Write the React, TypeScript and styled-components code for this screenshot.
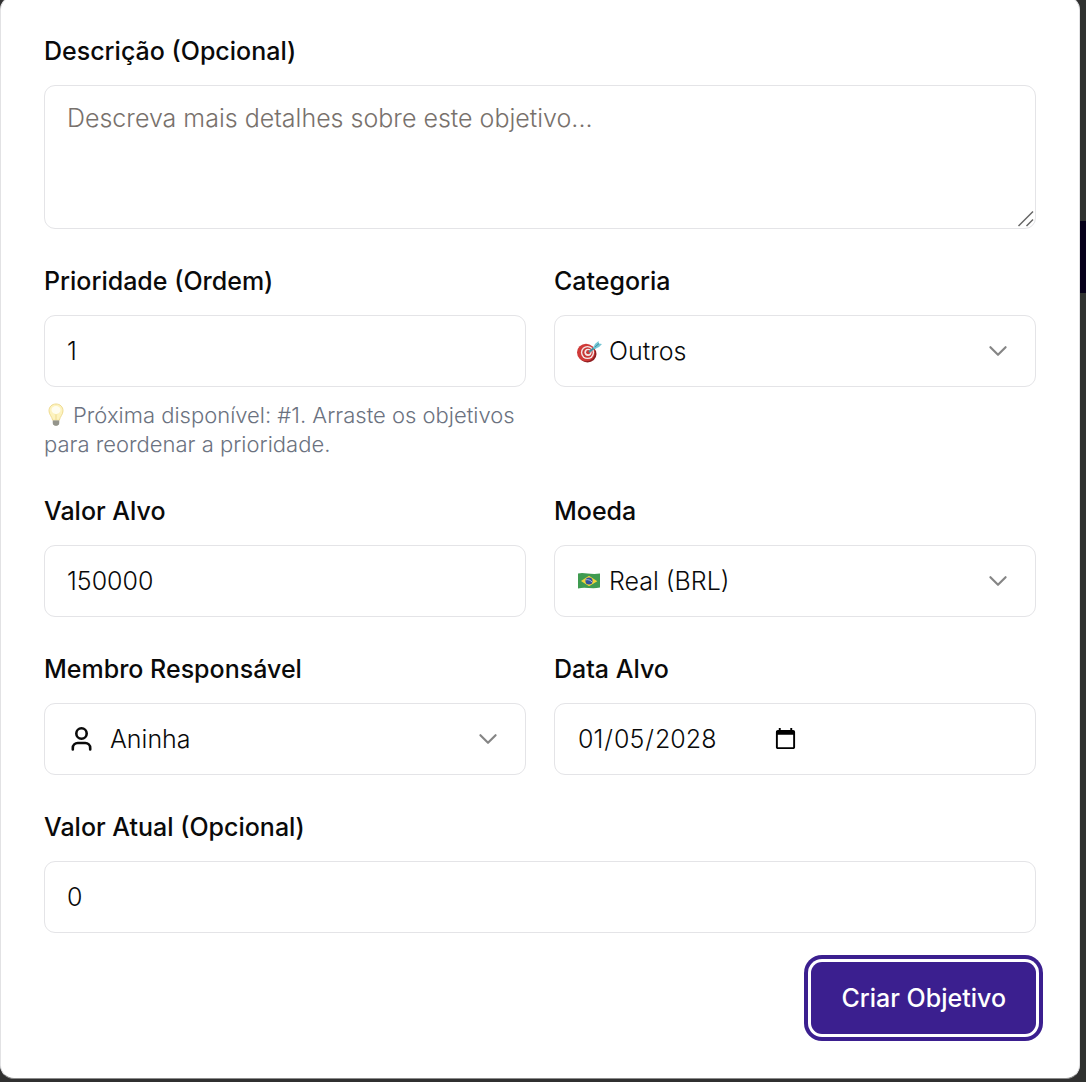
import React from "react";
import styled, { createGlobalStyle, css } from "styled-components";

const GlobalStyle = createGlobalStyle`
  *, *::before, *::after { box-sizing: border-box; }
  body {
    margin: 0;
    background: #303030;
    color: #0a0a0a;
    font-family: Inter, "Liberation Sans", sans-serif;
    font-size: 25px;
    font-weight: 300;
    overflow-x: hidden;
  }
`;

const Page = styled.div`
  display: grid;
  grid-template-columns: minmax(0, 1fr) 6px;
  min-height: 100vh;
  overflow: hidden;
`;

const Backdrop = styled.div`
  display: flex;
  flex-direction: column;
  padding-top: 221px;
  background: #303230;
`;

const BackdropStrip = styled.div`
  height: 72px;
  background: #06001a;
`;

const Dialog = styled.form`
  align-self: start;
  margin-top: -4px;
  padding: 36px 43px 44px;
  background: #ffffff;
  border: 1px solid #e2e2e4;
  border-bottom-color: #8c8c8c;
  border-radius: 14px;
`;

const Fields = styled.div`
  display: grid;
  grid-template-columns: repeat(2, minmax(0, 1fr));
  column-gap: 28px;
  row-gap: 34px;
`;

const Field = styled.div<{ $wide?: boolean }>`
  display: flex;
  flex-direction: column;
  grid-column: ${(p) => (p.$wide ? "1 / -1" : "auto")};
`;

const Label = styled.label`
  margin-bottom: 16px;
  font-weight: 500;
  line-height: 36px;
`;

const Hint = styled.p`
  margin: 14px 0 0;
  color: #6b7280;
  font-size: 22px;
  line-height: 29px;
`;

const controlStyle = css`
  width: 100%;
  height: 72px;
  margin: 0;
  padding: 0 22px;
  background: #ffffff;
  border: 1px solid #e4e4e7;
  border-radius: 11px;
  color: #0a0a0a;
  font: inherit;
  outline: none;
  appearance: none;
`;

const TextInput = styled.input`
  ${controlStyle}
`;

const DateInput = styled.input`
  ${controlStyle}

  &::-webkit-datetime-edit {
    flex: none;
  }
  &::-webkit-calendar-picker-indicator {
    width: 25px;
    height: 25px;
    margin-left: 10px;
    padding: 0;
  }
`;

const TextArea = styled.textarea`
  ${controlStyle}
  display: block;
  height: 144px;
  padding: 14px 22px;
  line-height: 36px;
  resize: vertical;

  &::placeholder {
    color: #78716c;
    opacity: 1;
  }
  &::-webkit-resizer {
    display: none;
  }
`;

const Overlay = styled.div`
  display: grid;
  align-items: center;

  > * {
    grid-area: 1 / 1;
  }
`;

const Select = styled.select<{ $indent: number }>`
  ${controlStyle}
  padding-left: ${(p) => p.$indent}px;
`;

const Lead = styled.span`
  display: flex;
  justify-self: start;
  margin-left: 22px;
  pointer-events: none;
`;

const Chevron = styled.svg`
  justify-self: end;
  margin-right: 25px;
  pointer-events: none;
`;

const Grip = styled.svg`
  align-self: end;
  justify-self: end;
  margin: 0 1px 1px 0;
  pointer-events: none;
`;

const Bulb = styled.svg`
  margin-right: 6px;
  vertical-align: -4px;
`;

const Actions = styled.div`
  display: flex;
  justify-content: flex-end;
  margin-top: 29px;
`;

const SubmitButton = styled.button`
  height: 72px;
  padding: 0 30px;
  background: #3b1f8f;
  border: 0;
  border-radius: 11px;
  box-shadow: 0 0 0 3px #ffffff, 0 0 0 7px #3b1f8f;
  color: #ffffff;
  font: inherit;
  font-weight: 500;
  cursor: pointer;
`;

const ChevronIcon = () => (
  <Chevron width="26" height="26" viewBox="0 0 24 24" fill="none" stroke="#858585" strokeWidth="2" strokeLinecap="round" strokeLinejoin="round" aria-hidden="true">
    <path d="m5 8.500 7 7 7-7" />
  </Chevron>
);

const TargetIcon = () => (
  <svg width="28" height="28" viewBox="0 0 28 28" aria-hidden="true">
    <ellipse cx="11.500" cy="17" rx="9" ry="8.500" fill="#8f1f22" />
    <ellipse cx="10" cy="15.500" rx="9" ry="8.800" fill="#d03a38" />
    <circle cx="11.500" cy="15.500" r="6.600" fill="#f3e9e8" />
    <circle cx="11.500" cy="15.500" r="5.200" fill="#c93735" />
    <circle cx="12" cy="15.300" r="3.600" fill="#f3e9e8" />
    <circle cx="12.200" cy="15.200" r="2.100" fill="#c93735" />
    <path d="M13 15 20 9.500" stroke="#3d8ea0" strokeWidth="2" />
    <path d="m17 11 2-4 3.600-3 .2 2.600L26 7l-3 3-4 2z" fill="#74c6d4" />
    <path d="m19 10 4-3.500" stroke="#3d8ea0" />
  </svg>
);

const BrazilIcon = () => (
  <svg width="28" height="28" viewBox="0 0 28 28" aria-hidden="true">
    <path d="M2 6.600c6-1.800 11 1.400 22 0v14c-9 1.700-15-1-22 1z" fill="#3f9b50" />
    <path d="m5 14 8-5.300 8.300 5.500-8.300 5z" fill="#f3d43b" />
    <circle cx="13" cy="14" r="3.600" fill="#31509d" />
    <path d="M9.800 12.800c2.500-.5 4.600.3 6.400 2.400" fill="none" stroke="#c8d6ea" strokeWidth=".8" />
  </svg>
);

const PersonIcon = () => (
  <svg width="30" height="30" viewBox="0 0 30 30" fill="none" stroke="#0a0a0a" strokeWidth="2.6" strokeLinecap="round" aria-hidden="true">
    <circle cx="15.500" cy="9.500" r="5.200" />
    <path d="M6.800 25.500v-1.500a5 5 0 0 1 5-5h7.400a5 5 0 0 1 5 5v1.500" />
  </svg>
);

const BulbIcon = () => (
  <Bulb width="23" height="24" viewBox="0 0 23 24" aria-hidden="true">
    <path d="M12 1C7.900 1 5 3.900 5 7.800c0 3.800 2.900 5.500 3.700 9.500h6.600c.8-4 3.700-5.700 3.700-9.500C19 3.900 16.100 1 12 1z" fill="#fdf3bf" stroke="#efdb91" />
    <path d="M10 9.500 11.500 12v5m2.500-7.500L12.500 12v5" fill="none" stroke="#f0dd95" strokeWidth=".6" />
    <ellipse cx="12" cy="7" rx="4.500" ry="4" fill="#fffdf0" />
    <path d="M8.800 17.200h6.400V21l-2 2h-2.400l-2-2z" fill="#a9a99f" />
    <path d="M8.800 19h6.400M9 21h6" stroke="#77776f" strokeWidth=".8" />
  </Bulb>
);

type SelectFieldProps = {
  id: string;
  label: string;
  option: string;
  icon: React.ReactNode;
  indent: number;
};

const SelectField = ({ id, label, option, icon, indent }: SelectFieldProps) => (
  <Field>
    <Label htmlFor={id}>{label}</Label>
    <Overlay>
      <Select id={id} $indent={indent}>
        <option>{option}</option>
      </Select>
      <Lead>{icon}</Lead>
      <ChevronIcon />
    </Overlay>
  </Field>
);

export default function App() {
  return (
    <>
      <GlobalStyle />
      <Page>
        <Dialog onSubmit={(e) => e.preventDefault()}>
          <Fields>
            <Field $wide>
              <Label htmlFor="descricao">Descrição (Opcional)</Label>
              <Overlay>
                <TextArea id="descricao" placeholder="Descreva mais detalhes sobre este objetivo..." />
                <Grip width="18" height="18" viewBox="0 0 18 18" stroke="#666666" strokeWidth="1.5" aria-hidden="true">
                  <path d="M1.500 16 16 1.500M9.500 16 16 9.500" />
                </Grip>
              </Overlay>
            </Field>

            <Field>
              <Label htmlFor="prioridade">Prioridade (Ordem)</Label>
              <TextInput id="prioridade" inputMode="numeric" defaultValue="1" />
              <Hint>
                <BulbIcon />
                Próxima disponível: #1. Arraste os objetivos para reordenar a prioridade.
              </Hint>
            </Field>
            <SelectField id="categoria" label="Categoria" option="Outros" icon={<TargetIcon />} indent={54} />

            <Field>
              <Label htmlFor="valor-alvo">Valor Alvo</Label>
              <TextInput id="valor-alvo" inputMode="decimal" defaultValue="150000" />
            </Field>
            <SelectField id="moeda" label="Moeda" option="Real (BRL)" icon={<BrazilIcon />} indent={54} />

            <SelectField id="membro" label="Membro Responsável" option="Aninha" icon={<PersonIcon />} indent={65} />
            <Field>
              <Label htmlFor="data-alvo">Data Alvo</Label>
              <DateInput id="data-alvo" type="date" defaultValue="2028-01-05" />
            </Field>

            <Field $wide>
              <Label htmlFor="valor-atual">Valor Atual (Opcional)</Label>
              <TextInput id="valor-atual" inputMode="decimal" defaultValue="0" />
            </Field>
          </Fields>
          <Actions>
            <SubmitButton type="submit">Criar Objetivo</SubmitButton>
          </Actions>
        </Dialog>
        <Backdrop>
          <BackdropStrip />
        </Backdrop>
      </Page>
    </>
  );
}
